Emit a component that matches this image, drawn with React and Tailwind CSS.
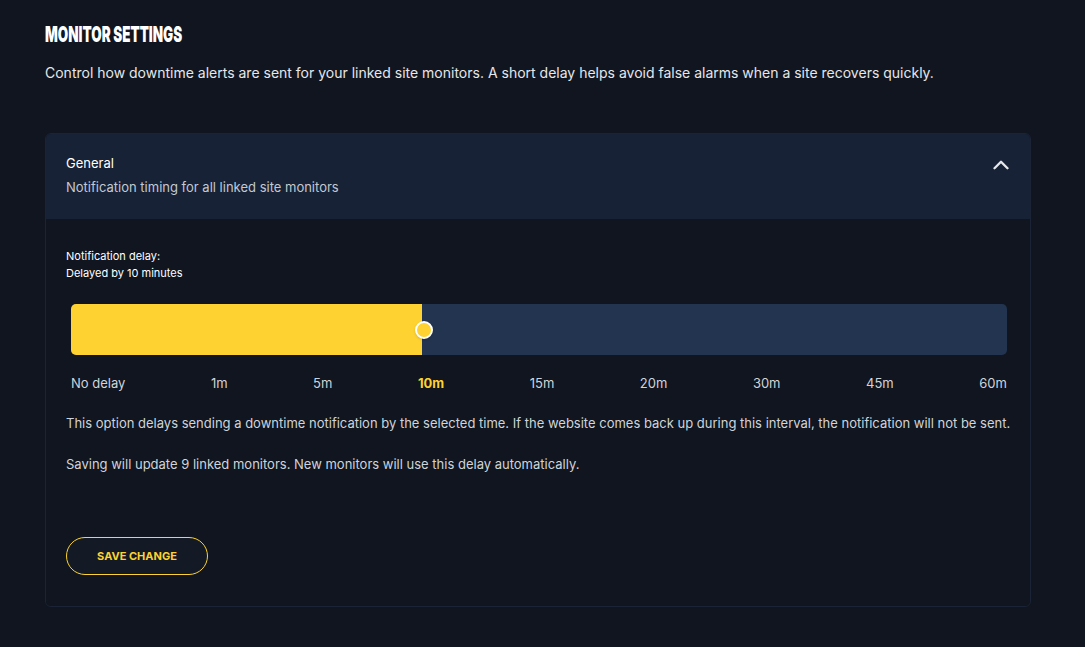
import React, { useState } from "react";
import { ChevronUp } from "lucide-react";

const STEPS = ["No delay", "1m", "5m", "10m", "15m", "20m", "30m", "45m", "60m"];

const DelaySlider = ({ value }) => {
  const pct = (value / (STEPS.length - 1)) * 100;

  return (
    <div className="ml-[5px] mr-[3px]">
      <div className="relative h-[51px] rounded-[5px] bg-[#22344f]">
        <div
          className="absolute inset-y-0 left-0 rounded-l-[5px] bg-[#fdd231]"
          style={{ width: `${pct}%` }}
        />
        <div
          className="absolute top-1/2 w-[18px] h-[18px] -translate-x-1/2 -translate-y-1/2 rounded-full border-2 border-white bg-[#fdd231] shadow"
          style={{ left: `calc(${pct}% + 2px)` }}
        />
      </div>
      <div className="mt-[18px] flex justify-between text-[13px] leading-5 text-[#cfd4db]">
        {STEPS.map((s, i) => (
          <span
            key={s}
            className={i === value ? "font-bold text-[#fdd231]" : ""}
          >
            {s}
          </span>
        ))}
      </div>
    </div>
  );
};

const App = () => {
  const [open] = useState(true);
  const [delay] = useState(3);

  return (
    <div className="min-h-screen bg-[#10151f] px-[45px] pt-[22px] font-['Inter',sans-serif]">
      <h1 className="origin-left scale-x-[0.61] whitespace-nowrap text-[22px] leading-[24px] font-black uppercase text-white">
        Monitor Settings
      </h1>
      <p className="mt-[17px] text-sm leading-5 text-[#e5e7eb]">
        Control how downtime alerts are sent for your linked site monitors. A
        short delay helps avoid false alarms when a site recovers quickly.
      </p>

      <div className="mt-[50px] w-[986px] overflow-hidden rounded-md border border-[#1b2436]">
        <div className="flex items-start justify-between bg-[#172236] pl-5 pr-4 pt-[19px] pb-[22px]">
          <div>
            <div className="text-[13px] leading-5 text-white">General</div>
            <div className="mt-1 text-[13px] leading-5 text-[#c3c9d2]">
              Notification timing for all linked site monitors
            </div>
          </div>
          <ChevronUp size={26} strokeWidth={2.2} className="mt-[-1px] text-[#e5e7eb]" />
        </div>

        {open && (
          <div className="bg-[#10151f] px-5 pt-[29px] pb-[31px]">
            <div className="text-[11px] leading-[17px] text-white">
              Notification delay:
              <br />
              Delayed by 10 minutes
            </div>

            <div className="mt-[22px]">
              <DelaySlider value={delay} />
            </div>

            <p className="mt-5 whitespace-nowrap text-[13px] leading-5 text-[#cfd4db]">
              This option delays sending a downtime notification by the selected
              time. If the website comes back up during this interval, the
              notification will not be sent.
            </p>
            <p className="mt-[21px] text-[13px] leading-5 text-[#cfd4db]">
              Saving will update 9 linked monitors. New monitors will use this
              delay automatically.
            </p>

            <button className="mt-[63px] h-[38px] w-[142px] rounded-full border border-[#fdd231] bg-[#131a26] text-[11px] font-bold uppercase text-[#fdd231]">
              Save Change
            </button>
          </div>
        )}
      </div>
    </div>
  );
};

export default App;
